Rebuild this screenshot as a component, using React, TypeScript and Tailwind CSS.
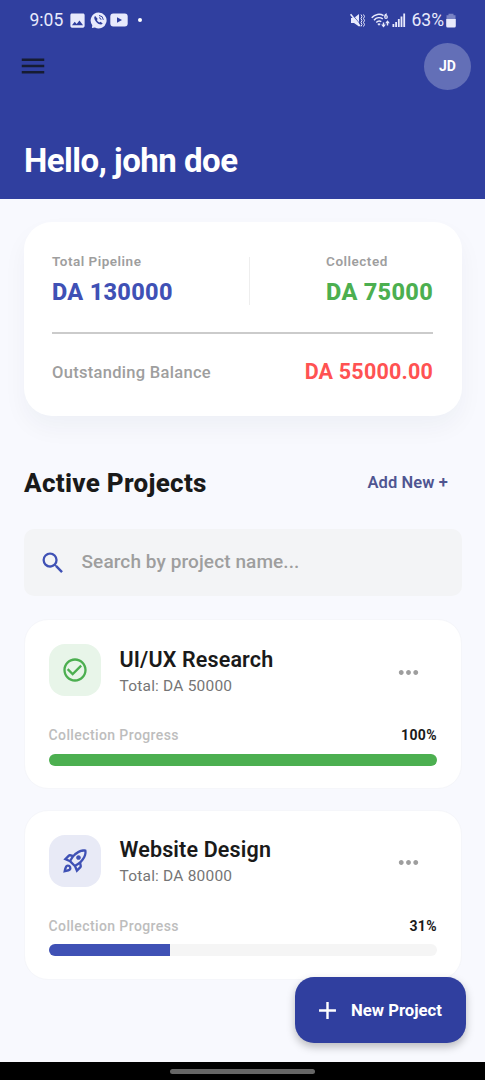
import React from 'react';
import {
    MdAdd,
    MdCheckCircleOutline,
    MdImage,
    MdMenu,
    MdMoreHoriz,
    MdOutlineRocketLaunch,
    MdSearch,
} from 'react-icons/md';

type Project = {
    name: string;
    total: number;
    collected: number;
};

const projects: Project[] = [
    { name: 'UI/UX Research', total: 50000, collected: 50000 },
    { name: 'Website Design', total: 80000, collected: 25000 },
];

function StatusBar() {
    return (
        <div className="flex h-10 items-center justify-between pl-[29.5px] pr-[29px] text-[#e8eafc]">
            <div className="flex items-center">
                <span className="w-[34px] text-[17.5px] leading-5 whitespace-nowrap">9:05</span>
                <MdImage className="ml-[4.5px]" size={19} />
                {/* Call */}
                <svg className="ml-[3px]" width="17" height="17" viewBox="0 0 17 17">
                    <path d="M8.5 .5a8 8 0 1 1-3.6 15.1L1.9 16l.4-2.700A8 8 0 0 1 8.500 .5Z" fill="currentColor" />
                    <path
                        d="M5.200 4.100c-1.700 1-.9 3.900 1.300 6.100s5 3 6.200 1.300l-2.200-1.800-1.200.9c-1.100-.6-1.900-1.400-2.500-2.500l.9-1.200Z"
                        fill="#303f9f"
                    />
                    <path d="M9 3.500a4.500 4.500 0 0 1 4.300 4.300M9 5.700a2.300 2.300 0 0 1 2.100 2.100" stroke="#303f9f" fill="none" />
                </svg>
                {/* Video */}
                <svg className="ml-[3px]" width="18" height="14" viewBox="0 0 18 14">
                    <rect x=".3" y=".5" width="17.400" height="13" rx="3" fill="currentColor" />
                    <path d="M7 4.300v5.400L12 7Z" fill="#303f9f" />
                </svg>
                <span className="ml-[10px] size-1 rounded-full bg-white" />
            </div>
            <div className="flex items-center">
                {/* Muted, vibrate */}
                <svg className="mr-0.5" width="15" height="15" viewBox="0 0 15 15" fill="none" stroke="currentColor">
                    <path d="M1 5h3l5-4v12.500L4 10H1Z" fill="currentColor" stroke="none" />
                    <path d="M1.800 1 10.500 11.500" stroke="#303f9f" strokeWidth=".8" />
                    <path d="M.6 1.200 10 13" strokeWidth="1.500" />
                    <path d="m11 1.500 1 2-1 2 1 2-1 2 1 2-1 2M13.500 1.500l1 2-1 2 1 2-1 2 1 2-1 2" strokeWidth="1" />
                </svg>
                {/* Wifi */}
                <svg className="ml-[4px]" width="19" height="15" viewBox="0 0 19 15" fill="none" stroke="currentColor">
                    <path d="M.7 4.800C4 1 9 .4 12.500 2.700M3 7.200c2.300-2.700 6-3.200 8.800-1.300M5.300 9.500c1.300-1.500 3.300-1.800 5-.9" strokeWidth="1.500" />
                    <path d="m8 12.800-1.600-1.900c1-.9 2.200-.9 3.200 0Z" fill="currentColor" stroke="none" />
                    <path d="M15.800 .8c-1.400.3-2 1.500-2 2.700" strokeWidth="1.200" />
                    <circle cx="15" cy="4" r="1.300" strokeWidth="1.200" />
                    <path d="M12.500 9.500v4M16.500 12.500v-4" strokeWidth="1.400" />
                    <path d="M10.200 11.500h4.600l-2.300 3ZM14.200 10.200h4.600l-2.300-3Z" fill="currentColor" stroke="none" />
                </svg>
                {/* Signal */}
                <svg className="ml-[2px]" width="14" height="14" viewBox="0 0 14 14" fill="currentColor">
                    <path d="M.5 11h1.800v3H.5ZM3.200 9H5v5H3.200ZM5.900 6h1.800v8H5.900ZM8.600 3.500h1.800V14H8.600ZM11.300 .5h1.800V14h-1.800Z" />
                </svg>
                <span className="ml-[5.5px] w-[33px] text-[17.5px] leading-5 whitespace-nowrap">63%</span>
                {/* Battery */}
                <svg className="ml-[1.5px]" width="10" height="15" viewBox="0 0 10 15" fill="currentColor">
                    <path d="M2.500 .8h5V2.300H9.500v4H.5v-4h2Z" opacity=".4" />
                    <path d="M.2 6h9.600v7a1.500 1.500 0 0 1-1.500 1.500H1.700A1.500 1.500 0 0 1 .2 13Z" />
                </svg>
            </div>
        </div>
    );
}

function Summary() {
    return (
        <section className="h-[194px] rounded-[28px] bg-white pt-[31px] pr-[29px] pl-[28px] shadow-[0_12px_24px_rgba(30,35,70,0.045)]">
            <div className="flex items-start justify-between">
                <div>
                    <p className="text-[13.5px] leading-4 font-semibold tracking-[0.5px] text-[#9e9e9e]">Total Pipeline</p>
                    <p className="mt-2 text-[23.5px] leading-[30px] font-extrabold tracking-[0.3px] text-[#3f51b5]">DA 130000</p>
                </div>
                <div className="mt-1 h-12 w-px bg-[#eeeeee]" />
                <div>
                    <p className="text-[13.5px] leading-4 font-semibold tracking-[0.5px] text-[#9e9e9e]">Collected</p>
                    <p className="mt-2 text-[23.5px] leading-[30px] font-extrabold tracking-[0.3px] text-[#4caf50]">DA 75000</p>
                </div>
            </div>
            <div className="mt-[25px] h-[1.5px] bg-[#cbcbcb]" />
            <div className="mt-[24.5px] flex items-center justify-between">
                <span className="pt-px text-[16.5px] leading-7 font-medium tracking-[0.3px] text-[#9e9e9e]">Outstanding Balance</span>
                <span className="-mt-px text-[21.5px] leading-7 font-bold tracking-[0.2px] text-[#ff5252]">DA 55000.00</span>
            </div>
        </section>
    );
}

function ProjectCard({ project }: { project: Project }) {
    const percent = (project.collected / project.total) * 100;
    const done = percent >= 100;

    return (
        <article className="h-[170px] rounded-[24px] border border-[#f5f6fa] bg-white pt-[24px] pr-[24px] pl-[23.5px]">
            <div className="flex h-[52px] items-center">
                {done ? (
                    <div className="flex size-[52px] items-center justify-center rounded-[16px] bg-[#e8f5e9] text-[#4caf50]">
                        <MdCheckCircleOutline size={28} />
                    </div>
                ) : (
                    <div className="flex size-[52px] items-center justify-center rounded-[16px] bg-[#e8eaf6] text-[#3f51b5]">
                        <MdOutlineRocketLaunch size={28} />
                    </div>
                )}
                <div className="ml-[19px] flex-1 pt-[3px]">
                    <h3 className="text-[21.5px] leading-7 font-semibold tracking-[0.15px] text-[#1a1a1a]">{project.name}</h3>
                    <p className="text-[15.5px] leading-6 tracking-[0.2px] text-[#757575]">Total: DA {project.total}</p>
                </div>
                <button className="mt-1 mr-[14px] text-[#9e9e9e]" aria-label="Project options">
                    <MdMoreHoriz size={29} />
                </button>
            </div>
            <div className="mt-[30px] flex justify-between leading-[18px]">
                <span className="text-[14px] font-medium tracking-[0.4px] text-[#bdbdbd]">Collection Progress</span>
                <span className="text-[14px] font-bold tracking-[0.4px] text-[#1a1a1a]">{Math.round(percent)}%</span>
            </div>
            <div className="mt-[9.5px] h-3 overflow-hidden rounded-full bg-[#f5f5f5]">
                <div className={done ? 'h-full bg-[#4caf50]' : 'h-full bg-[#3f51b5]'} style={{ width: `${percent}%` }} />
            </div>
        </article>
    );
}

export default function App() {
    return (
        <div className="relative flex h-[1080px] w-[485px] flex-col overflow-hidden bg-[#f8f9fe] font-['Roboto',sans-serif]">
            <header className="h-[198.5px] shrink-0 bg-[#303f9f]">
                <StatusBar />
                <div className="mt-[3px] flex items-center justify-between pr-[14px] pl-[18px]">
                    <button className="-mt-px text-[#161c33]" aria-label="Menu">
                        <MdMenu size={30} />
                    </button>
                    <div className="flex size-[47px] items-center justify-center rounded-full bg-[#636fb7] text-[14px] font-bold text-white">
                        JD
                    </div>
                </div>
                <h1 className="mt-[51px] pl-[24px] text-[33px] leading-10 font-bold tracking-[-0.5px] text-white">Hello, john doe</h1>
            </header>

            <main className="flex-1 pt-[23.5px] pr-[23px] pl-[24px]">
                <Summary />
                <div className="mt-[50.5px] flex h-8 items-center justify-between pr-[14px]">
                    <h2 className="text-[26px] leading-8 font-extrabold tracking-[0.3px] text-[#1a1a1a]">Active Projects</h2>
                    <span className="text-[16.5px] leading-5 font-semibold tracking-[0.1px] text-[#4f5591]">Add New +</span>
                </div>
                <div className="mt-[30.5px] flex h-[67px] items-center rounded-[10px] bg-[#f3f4f6] pl-[15px]">
                    <MdSearch className="text-[#3f51b5]" size={28} />
                    <span className="ml-[14.5px] text-[19px] font-medium tracking-[0.1px] text-[#9e9e9e]">
                        Search by project name...
                    </span>
                </div>
                <div className="mt-[23px] flex flex-col gap-[20.5px]">
                    {projects.map((project) => (
                        <ProjectCard key={project.name} project={project} />
                    ))}
                </div>
            </main>

            {/* Floating action */}
            <button className="absolute right-[19px] bottom-[37px] flex h-[66px] w-[171.5px] items-center rounded-[19px] bg-[#303f9f] pt-px pl-[18px] text-white shadow-[0_4px_8px_rgba(0,0,0,0.25)]">
                <MdAdd size={29} />
                <span className="ml-[9.5px] text-[16.7px] font-bold whitespace-nowrap">New Project</span>
            </button>

            {/* Gesture bar */}
            <div className="flex h-[18px] shrink-0 items-center justify-center bg-black">
                <div className="h-[5px] w-[145px] rounded-full bg-[#666666]" />
            </div>
        </div>
    );
}
